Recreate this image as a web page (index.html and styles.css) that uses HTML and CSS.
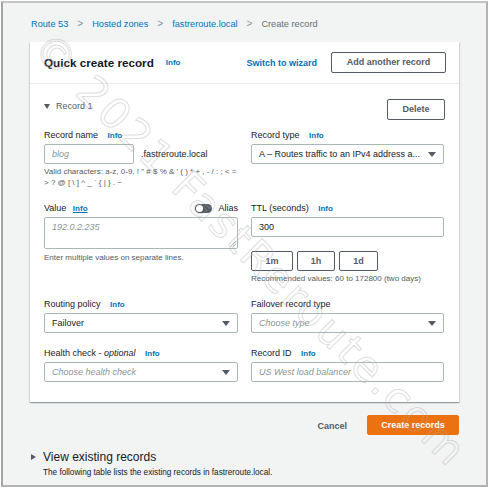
FILE: index.html
```html
<!DOCTYPE html>
<html>
<head>
<meta charset="utf-8">
<link rel="stylesheet" href="styles.css">
</head>
<body>
<div class="frame">
  <nav class="crumbs">
    <a>Route 53</a><span class="sep">&gt;</span><a>Hosted zones</a><span class="sep">&gt;</span><a>fastreroute.local</a><span class="sep">&gt;</span><span class="cur">Create record</span>
  </nav>

  <section class="card">
    <header class="card-head">
      <h1>Quick create record</h1><span class="info">Info</span>
      <span class="spacer"></span>
      <a class="link-btn">Switch to wizard</a>
      <button class="btn">Add another record</button>
    </header>

    <div class="record">
      <div class="rec-head">
        <span class="rec-title"><span class="tri-down"></span>Record 1</span>
        <button class="btn btn-del">Delete</button>
      </div>

      <div class="grid">
        <div class="field">
          <label>Record name <span class="info">Info</span></label>
          <div class="name-row">
            <div class="input small ph">blog</div>
            <span class="suffix">.fastreroute.local</span>
          </div>
          <p class="hint">Valid characters: a-z, 0-9, ! " # $ % &amp; ' ( ) * + , - / : ; &lt; =<br>&gt; ? @ [ \ ] ^ _ ` { | } . ~</p>
        </div>
        <div class="field">
          <label>Record type <span class="info">Info</span></label>
          <div class="input select">A – Routes traffic to an IPv4 address a...<span class="caret"></span></div>
        </div>

        <div class="field">
          <div class="label-row">
            <label>Value <span class="info ul">Info</span></label>
            <span class="toggle"><span class="track"><span class="knob"></span></span>Alias</span>
          </div>
          <div class="input textarea ph">192.0.2.235<span class="grip"></span></div>
          <p class="hint mt">Enter multiple values on separate lines.</p>
        </div>
        <div class="field">
          <label>TTL (seconds) <span class="info">Info</span></label>
          <div class="input">300</div>
          <div class="ttl-btns">
            <button class="btn sm">1m</button>
            <button class="btn sm">1h</button>
            <button class="btn sm">1d</button>
          </div>
          <p class="hint">Recommended values: 60 to 172800 (two days)</p>
        </div>

        <div class="field">
          <label>Routing policy <span class="info">Info</span></label>
          <div class="input select">Failover<span class="caret"></span></div>
        </div>
        <div class="field">
          <label>Failover record type</label>
          <div class="input select ph">Choose type<span class="caret"></span></div>
        </div>

        <div class="field">
          <label>Health check - <i>optional</i> <span class="info">Info</span></label>
          <div class="input select ph">Choose health check<span class="caret"></span></div>
        </div>
        <div class="field">
          <label>Record ID <span class="info">Info</span></label>
          <div class="input ph">US West load balancer</div>
        </div>
      </div>
    </div>
  </section>

  <div class="actions">
    <a class="cancel">Cancel</a>
    <button class="btn primary">Create records</button>
  </div>

  <div class="existing">
    <h2><span class="tri-right"></span>View existing records</h2>
    <p>The following table lists the existing records in fastreroute.local.</p>
  </div>

  <div class="watermark">© 2021 FastReroute.com</div>
</div>
</body>
</html>
```

FILE: styles.css
```css
* { box-sizing: border-box; }
html, body { margin: 0; padding: 0; background: #fff; }
body {
  font-family: "Liberation Sans", Arial, sans-serif;
  color: #16191f;
  font-size: 9px;
  line-height: 12px;
}
.frame {
  position: relative;
  margin: 1px 0 0 1px;
  width: 487px;
  height: 486px;
  border: 2px solid #b3b3b3;
  border-left-color: #a4a4a4;
  border-top-color: #c4c4c4;
  background: #f2f3f3;
  padding: 15px 27px 0 27px;
  overflow: hidden;
}
.crumbs {
  display: flex;
  align-items: center;
  height: 12px;
  padding-left: 1px;
  font-size: 9.2px;
}
.crumbs a { color: #0073bb; }
.crumbs .sep {
  color: #879596;
  margin: 0 9px 0 9px;
  font-size: 10px;
}
.crumbs .cur { color: #687078; }

.card {
  margin-top: 12px;
  background: #fff;
  box-shadow: 0 1px 1px 0 rgba(0,28,36,.25), 1px 1px 1px 0 rgba(0,28,36,.1), -1px 1px 1px 0 rgba(0,28,36,.1);
}
.card-head {
  display: flex;
  align-items: center;
  height: 42px;
  padding: 0 13px 0 14px;
  border-bottom: 1px solid #eaeded;
}
.card-head h1 {
  margin: 0;
  font-size: 11.7px;
  font-weight: bold;
  color: #16191f;
}
.info {
  color: #0073bb;
  font-weight: bold;
  font-size: 8px;
  margin-left: 7px;
}
.info.ul { text-decoration: underline; margin-left: 4px; }
.card-head .info { margin-left: 12px; }
.spacer { flex: 1; }
.link-btn {
  color: #0073bb;
  font-weight: bold;
  font-size: 9px;
  margin-right: 14px;
}
.btn {
  font-family: inherit;
  font-weight: bold;
  font-size: 9px;
  color: #545b64;
  background: #fff;
  border: 1px solid #545b64;
  border-radius: 2px;
  height: 21px;
  padding: 0 12px;
  line-height: 19px;
}
.card-head .btn { width: 115px; padding: 0; }

.record { padding: 15px 14px 20px 14px; }
.rec-head {
  display: flex;
  justify-content: space-between;
  align-items: flex-start;
  height: 21px;
}
.rec-title {
  display: flex;
  align-items: center;
  font-size: 9px;
  color: #545b64;
  margin-top: 1px;
}
.tri-down {
  width: 0; height: 0;
  border-left: 3px solid transparent;
  border-right: 3px solid transparent;
  border-top: 5px solid #545b64;
  margin-right: 6px;
}
.btn-del { width: 58px; padding: 0; }

.grid {
  margin-top: 9px;
  display: grid;
  grid-template-columns: 194px 193px;
  column-gap: 13px;
  row-gap: 14px;
}
.field { display: flex; flex-direction: column; }
.field label { display: block; height: 12px; line-height: 12px; margin-bottom: 3px; color: #16191f; }
.field label i { font-style: italic; }
.label-row { display: flex; justify-content: space-between; align-items: center; margin-bottom: 3px; }
.label-row label { margin-bottom: 0; }
.toggle { display: flex; align-items: center; gap: 6px; }
.track {
  position: relative;
  width: 17px; height: 9px;
  border-radius: 5px;
  background: #545b64;
}
.knob {
  position: absolute;
  left: 1px; top: 1px;
  width: 7px; height: 7px;
  border-radius: 50%;
  background: #fff;
}
.input {
  position: relative;
  height: 20px;
  border: 1px solid #aab7b8;
  border-radius: 2px;
  background: #fff;
  padding: 0 7px;
  line-height: 18px;
  font-size: 9px;
  color: #16191f;
  white-space: nowrap;
  overflow: hidden;
}
.ph { color: #879596; font-style: italic; }
.select { padding-right: 20px; }
.caret {
  position: absolute;
  right: 7px; top: 7px;
  width: 0; height: 0;
  border-left: 4px solid transparent;
  border-right: 4px solid transparent;
  border-top: 5px solid #545b64;
}
.name-row { display: flex; align-items: center; }
.input.small { width: 90px; }
.suffix { margin-left: 7px; font-size: 9px; color: #16191f; }
.hint {
  margin: 2px 0 0 0;
  font-size: 8px;
  line-height: 11px;
  color: #545b64;
  white-space: nowrap;
}
.hint.mt { margin-top: 3px; }
.textarea { height: 32px; line-height: 18px; }
.grip {
  position: absolute;
  right: 1px; bottom: 1px;
  width: 6px; height: 6px;
  background: linear-gradient(135deg, transparent 45%, #aab7b8 45%, #aab7b8 55%, transparent 55%, transparent 70%, #aab7b8 70%, #aab7b8 80%, transparent 80%);
}
.ttl-btns { display: flex; gap: 4px; margin-top: 14px; }
.btn.sm { height: 20px; line-height: 18px; width: 42px; padding: 0; }
.ttl-btns .btn.sm:nth-child(2) { width: 38px; }
.ttl-btns .btn.sm:nth-child(3) { width: 39px; }

.actions {
  display: flex;
  justify-content: flex-end;
  align-items: center;
  margin-top: 13px;
}
.cancel {
  color: #545b64;
  font-weight: bold;
  font-size: 9px;
  margin-right: 20px;
  margin-top: 2px;
}
.btn.primary {
  background: #ec7211;
  border-color: #ec7211;
  color: #fff;
  width: 92px;
  height: 20px;
  line-height: 18px;
  padding: 0;
}

.existing { margin-top: 15px; padding-left: 1px; }
.existing h2 {
  display: flex;
  align-items: center;
  margin: 0;
  font-size: 12px;
  font-weight: normal;
  line-height: 14px;
  color: #16191f;
}
.tri-right {
  width: 0; height: 0;
  border-top: 3px solid transparent;
  border-bottom: 3px solid transparent;
  border-left: 5px solid #545b64;
  margin-right: 7px;
}
.existing p {
  margin: 3px 0 0 12px;
  font-size: 8.2px;
  line-height: 11px;
  color: #16191f;
}

.watermark {
  position: absolute;
  left: 247px;
  top: 247px;
  transform: translate(-50%, -50%) rotate(45deg);
  white-space: nowrap;
  font-family: "DejaVu Sans", sans-serif;
  font-size: 42px;
  letter-spacing: 3px;
  color: rgba(255,255,255,0);
  -webkit-text-stroke: 1px rgba(170,170,170,0.4);
  pointer-events: none;
}
```
